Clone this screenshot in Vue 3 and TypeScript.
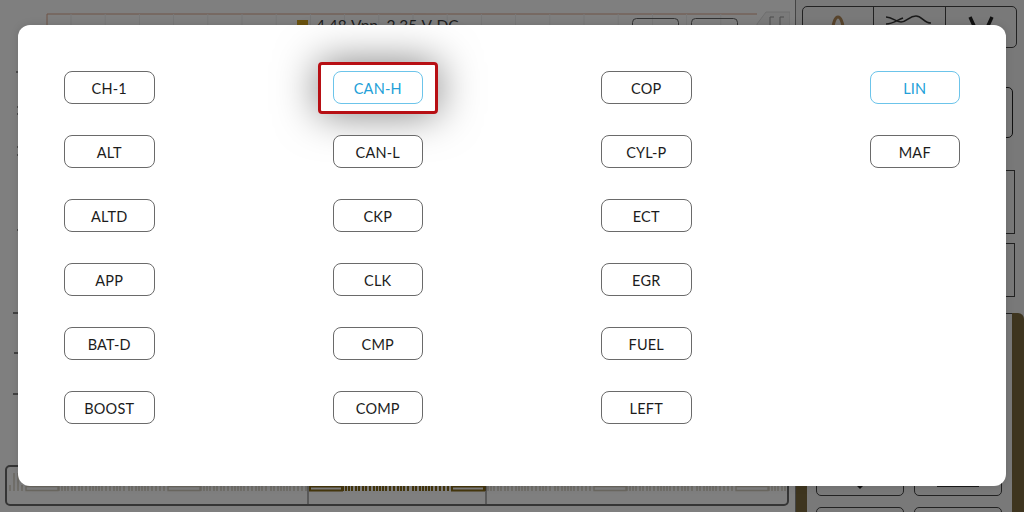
<script setup lang="ts">
const columns: string[][] = [
  ['CH-1', 'ALT', 'ALTD', 'APP', 'BAT-D', 'BOOST'],
  ['CAN-H', 'CAN-L', 'CKP', 'CLK', 'CMP', 'COMP'],
  ['COP', 'CYL-P', 'ECT', 'EGR', 'FUEL', 'LEFT'],
  ['LIN', 'MAF'],
]
const active = new Set(['CAN-H', 'LIN'])
const gridXs: number[] = Array.from({ length: 20 }, (_, i) => 71 + i * 34.2)
const ticks: [number, number, number][] = [
  [16, 72, 2], [17, 107, 1], [17, 114, 1], [17, 147, 1], [17, 155, 1],
  [17, 230, 2], [13, 313, 5], [14, 353, 4], [13, 394, 5],
]

// One period of the recorded signal: a flat burst followed by irregular spikes.
const spikes = [33, 36, 39, 42, 46, 49, 53, 56, 60, 64, 67, 70, 73, 76, 80, 84, 88, 91, 94, 98, 103, 106, 110, 113, 116, 119, 122, 126, 130, 134, 138]
function wavePath(from: number, to: number): string {
  const period = 142
  const parts: string[] = []
  for (let start = 303 - period * 3; start < to; start += period) {
    if (start + 32 > from && start < to) {
      const a = Math.max(start, from)
      const b = Math.min(start + 32, to)
      parts.push(`M${a} 19.5 H${b} V23.5 H${a} Z`)
    }
    for (const s of spikes) {
      const x = start + s
      if (x >= from && x <= to) {
        parts.push(`M${x} 24 V${s % 3 === 0 ? 18 : 6}`)
      }
    }
  }
  return parts.join(' ')
}
const fadedA = wavePath(3, 300)
const fadedB = wavePath(481, 780)
const strong = wavePath(303, 478)
</script>

<template>
  <div class="screen">
    <div class="main">
      <svg class="chart" viewBox="0 0 790 465" width="790" height="465">
        <line x1="47" y1="14" x2="757" y2="14" stroke="#dca58c" />
        <line x1="47" y1="14" x2="47" y2="60" stroke="#dca58c" />
        <line v-for="x in gridXs" :key="x" :x1="x" y1="14" :x2="x" y2="60" stroke="#efefef" />
        <line v-for="t in ticks" :key="t[1]" :x1="t[0]" :y1="t[1]" x2="18" :y2="t[1]" stroke="#333" :stroke-width="t[2] > 2 ? 1.2 : 1" />
        <rect x="297" y="20" width="11" height="10" fill="#d8a820" />
        <text x="316" y="31" class="legend">4.48 Vpp, 2.35 V DC</text>
        <rect x="632.5" y="18.5" width="46" height="20" rx="4" fill="none" stroke="#666" />
        <rect x="691.5" y="18.5" width="46" height="20" rx="4" fill="none" stroke="#666" />
        <path d="M757 30 L757 24 L766 12 L790 12 L790 30" fill="#f4f4f4" stroke="#ddd" />
        <path d="M770 27 V17 H774 M780 27 V17 H784" fill="none" stroke="#999" />
      </svg>
      <div class="wave-box">
        <svg class="wave" viewBox="0 0 780 37" width="780" height="37">
          <path :d="fadedA" class="trace-faded" />
          <path :d="fadedB" class="trace-faded" />
          <path :d="strong" class="trace-strong" />
          <line x1="301" y1="19" x2="301" y2="40" stroke="#666" />
          <line x1="479" y1="19" x2="479" y2="40" stroke="#666" />
        </svg>
      </div>
    </div>

    <aside class="panel">
      <div class="segments">
        <div class="segment">
          <svg width="30" height="24" viewBox="0 0 30 24"><path d="M9 24 C10 9 13 6 15 6 C17 6 20 9 21 24" fill="none" stroke="#b08858" stroke-width="3" /></svg>
        </div>
        <div class="segment">
          <svg width="48" height="24" viewBox="0 0 48 24"><path d="M1 6 C8 6 10 11 16 11 C22 11 24 5 31 5 C37 5 39 12 46 12 M1 13 C8 13 12 9 18 7" fill="none" stroke="#333" stroke-width="1.6" /></svg>
        </div>
        <div class="segment">
          <svg width="30" height="30" viewBox="0 0 30 30"><path d="M4 6 L15 30 L26 6" fill="none" stroke="#222" stroke-width="3.4" /></svg>
        </div>
      </div>
      <div class="box box-a"></div>
      <div class="box box-b"></div>
      <div class="box box-c"></div>
      <div class="lower">
        <div class="strip"></div>
        <div class="lower-mid">
          <div class="lower-head"></div>
          <div class="controls">
            <div class="ctl"><span class="caret"></span></div>
            <div class="ctl"><span class="dash"></span></div>
            <div class="ctl"></div>
            <div class="ctl"></div>
          </div>
        </div>
        <div class="strip strip-end"></div>
      </div>
    </aside>

    <div class="overlay">
      <div class="dialog">
        <div v-for="(col, i) in columns" :key="i" class="col">
          <div v-for="name in col" :key="name" class="item">
            <button class="pill" :class="{ on: active.has(name) }" type="button">{{ name }}</button>
            <span v-if="name === 'CAN-H'" class="focus-ring"></span>
          </div>
        </div>
      </div>
    </div>
  </div>
</template>

<style scoped>
.screen {
  position: relative;
  display: flex;
  width: 1024px;
  height: 512px;
  overflow: hidden;
  background: #fff;
  font-family: Lato, "Noto Sans", sans-serif;
}
.main {
  display: flex;
  flex-direction: column;
  width: 795px;
  flex: none;
}
.chart {
  display: block;
  flex: none;
}
.legend {
  font-family: Lato, sans-serif;
  font-size: 15.5px;
  fill: #444;
  word-spacing: 1px;
}
.wave-box {
  width: 784px;
  height: 41px;
  box-sizing: border-box;
  margin-left: 5px;
  border: 2px solid #6a6a6a;
  border-radius: 5px;
  overflow: hidden;
}
.wave {
  display: block;
}
.trace-faded {
  fill: none;
  stroke: #d4cfc0;
  stroke-width: 1.4;
}
.trace-strong {
  fill: none;
  stroke: #8a6c18;
  stroke-width: 2;
}
.panel {
  display: flex;
  flex-direction: column;
  flex: 1;
  box-sizing: border-box;
  padding-top: 6px;
  background: #f2f2f2;
  border-left: 1px solid #888;
}
.segments {
  display: flex;
  width: 215px;
  height: 42px;
  box-sizing: border-box;
  margin-left: 6px;
  border: 1.5px solid #444;
  border-radius: 5px;
}
.segment {
  display: flex;
  flex: 1;
  justify-content: center;
  padding-top: 4px;
  border-left: 1.5px solid #444;
}
.segment:first-child {
  border-left: 0;
}
.box {
  box-sizing: border-box;
  border: 1.5px solid #222;
}
.box-a {
  width: 207px;
  height: 51px;
  margin: 39px 0 0 10px;
  border-radius: 5px;
}
.box-b {
  width: 209px;
  height: 64px;
  margin: 32px 0 0 10px;
  border-color: #444;
}
.box-c {
  width: 209px;
  height: 54px;
  margin: 9px 0 0 10px;
  border-color: #444;
}
.lower {
  display: flex;
  flex: 1;
  margin-top: 16px;
  min-height: 0;
}
.strip {
  flex: none;
  width: 11px;
  background: #7c6a3e;
}
.strip-end {
  width: 12px;
  border-radius: 0 6px 0 0;
}
.lower-mid {
  display: flex;
  flex-direction: column;
  flex: 1;
  min-width: 0;
}
.lower-head {
  height: 29px;
  border-bottom: 1px solid #444;
  border-right: 1px solid #444;
}
.controls {
  display: grid;
  grid-template-columns: 88px 88px;
  grid-auto-rows: 30px;
  gap: 11px 10px;
  margin-top: 152px;
  margin-left: 9px;
}
.ctl {
  position: relative;
  display: flex;
  justify-content: center;
  box-sizing: border-box;
  border: 1.5px solid #444;
  border-radius: 5px;
}
.caret {
  width: 0;
  height: 0;
  margin-top: 19px;
  border: 3px solid transparent;
  border-top-color: #222;
}
.dash {
  width: 42px;
  height: 1px;
  margin-top: 19px;
  background: #333;
}
.overlay {
  position: absolute;
  inset: 0;
  background: rgba(0, 0, 0, 0.5);
}
.dialog {
  position: absolute;
  left: 18px;
  top: 25.3px;
  display: flex;
  justify-content: space-between;
  box-sizing: border-box;
  width: 988px;
  height: 460.7px;
  padding: 46px 46px 0;
  background: #fff;
  border-radius: 12px;
  box-shadow: 0 0 8px rgba(0, 0, 0, 0.12);
}
.col {
  display: flex;
  flex-direction: column;
  gap: 31px;
}
.item {
  position: relative;
}
.pill {
  display: block;
  width: 90.5px;
  height: 33px;
  padding: 1px 0 0;
  background: #fff;
  border: 1px solid #6a6a6a;
  border-radius: 8px;
  color: #1c1c1c;
  font-family: Lato, "Noto Sans", sans-serif;
  font-size: 14.5px;
  letter-spacing: 0.2px;
}
.pill.on {
  border-color: #6cc4ea;
  color: #239fd8;
}
.focus-ring {
  position: absolute;
  left: -15px;
  top: -9px;
  width: 120.5px;
  height: 52px;
  box-sizing: border-box;
  border: 3px solid #b70f14;
  border-radius: 4px;
  box-shadow: 0 0 42px rgba(0, 0, 0, 0.5);
  pointer-events: none;
}
</style>
